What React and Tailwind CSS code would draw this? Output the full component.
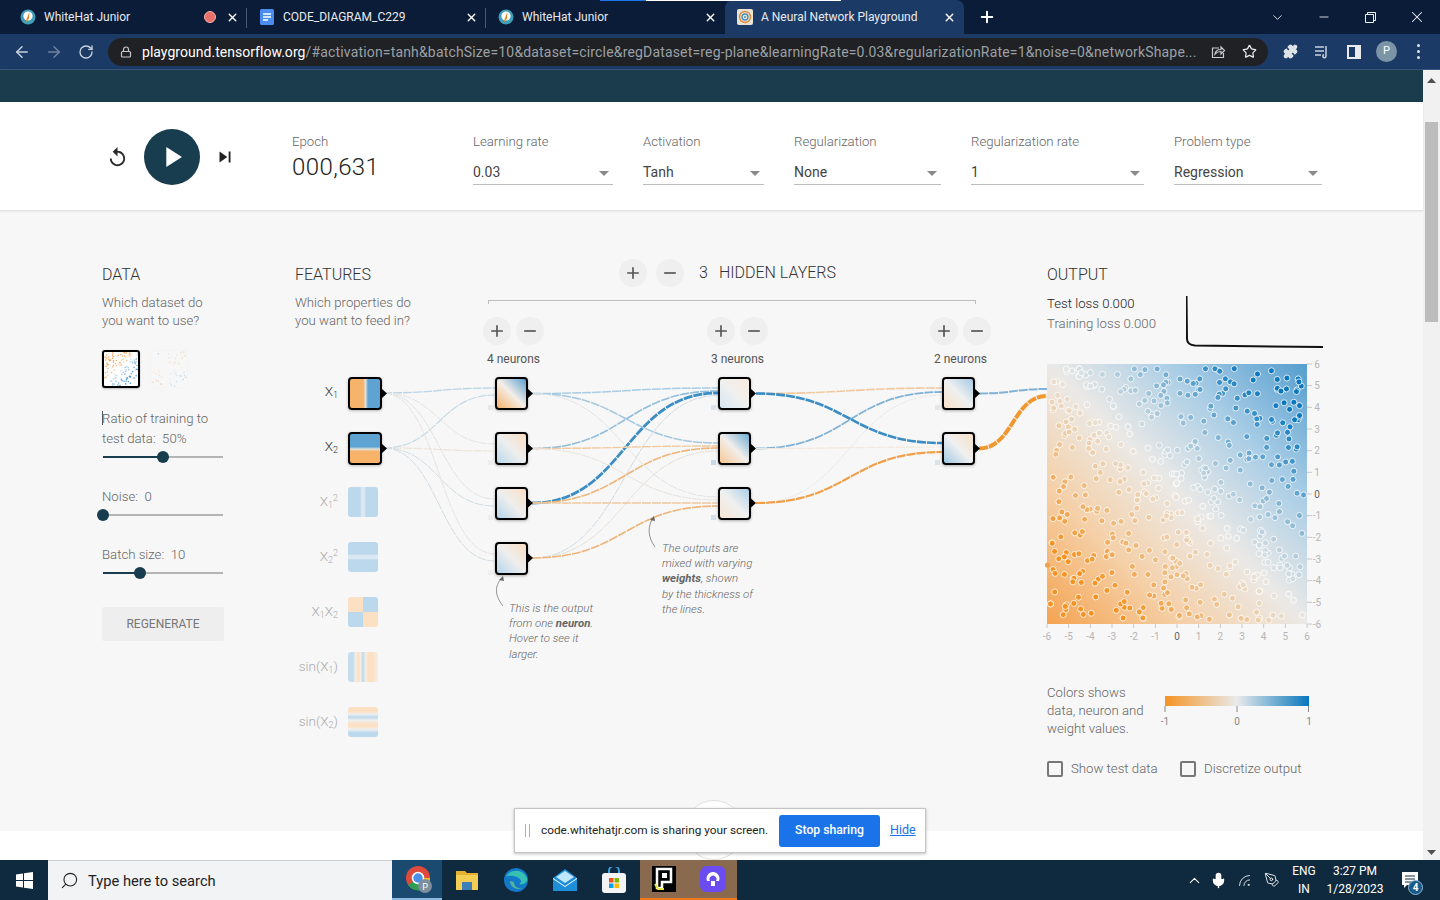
import {
  ArrowLeft, ArrowRight, RotateCw, Lock, Star, Puzzle, X, Plus, ChevronDown, Minus, Mic, ChevronUp, Search, Rss, PenTool,
} from 'lucide-react';

// seeded random so the scatter plots stay the same on every render
function rng(seed) {
  let a = seed;
  return () => {
    a |= 0; a = (a + 0x6d2b79f5) | 0;
    let t = Math.imul(a ^ (a >>> 15), 1 | a);
    t = (t + Math.imul(t ^ (t >>> 7), 61 | t)) ^ t;
    return ((t ^ (t >>> 14)) >>> 0) / 4294967296;
  };
}

const mix = (c1, c2, t) =>
  `rgb(${c1.map((c, i) => Math.round(c + (c2[i] - c) * t)).join(',')})`;
const MID = [232, 232, 230];
const BLUE = [8, 119, 189];
const ORANGE = [245, 147, 34];
const pointColor = (t) => (t > 0 ? mix(MID, BLUE, Math.min(t, 1)) : mix(MID, ORANGE, Math.min(-t, 1)));

function makePoints(n, seed) {
  const r = rng(seed);
  const out = [];
  for (let i = 0; i < n; i++) {
    out.push({ x: r() * 11.7 - 5.85, y: r() * 11.7 - 5.85 });
  }
  return out;
}

const points = makePoints(540, 23);
const thumbPoints = makePoints(120, 5);
const thumbPoints2 = makePoints(50, 9);

// links between nodes, page coordinates
const LIGHT = '#a9cce3';
const MIDBLUE = '#7fb2d6';
const DARKBLUE = '#3b8dc4';
const PALEORANGE = '#f0c9a0';
const MIDORANGE = '#eeb47a';
const GREY = '#e2e3e2';
const GREYBLUE = '#d3dde4';
const links = [
  [383, 393, 495, 388, '#b9d5e8', 1.3],
  [383, 448, 495, 395, '#c4dbe6', 1.2],
  [383, 393, 495, 444, GREY, 1],
  [383, 448, 495, 451, '#ece4d8', 1.2],
  [383, 393, 495, 499, GREY, 1],
  [383, 448, 495, 506, GREYBLUE, 1],
  [383, 393, 495, 554, GREY, 1],
  [383, 448, 495, 561, GREYBLUE, 1],

  [532, 393.5, 718, 388, LIGHT, 1.5],
  [532, 448.5, 718, 391, '#93bedb', 1.6],
  [532, 503, 718, 393, DARKBLUE, 2.8],
  [532, 558, 718, 395.5, '#d2dce3', 1],
  [532, 393.5, 718, 443, '#a3c8e0', 1.5],
  [532, 448.5, 718, 446, PALEORANGE, 1.4],
  [532, 503, 718, 448, MIDORANGE, 1.6],
  [532, 558, 718, 451, '#e6e0d8', 1],
  [532, 393.5, 718, 497, GREY, 1],
  [532, 448.5, 718, 500, '#e8e3dc', 1],
  [532, 503, 718, 503, PALEORANGE, 1.4],
  [532, 558, 718, 506, MIDORANGE, 1.6],

  [756, 393.5, 942, 388, PALEORANGE, 1.6],
  [756, 448.5, 942, 392, MIDBLUE, 1.8],
  [756, 503, 942, 395, '#eaeaea', 1],
  [756, 393.5, 942, 443, DARKBLUE, 2.6],
  [756, 448.5, 942, 447, '#f1e7dc', 1.2],
  [756, 503, 942, 452, '#f0a04a', 2.2],

  [979, 393.5, 1047, 389, MIDBLUE, 2],
  [979, 448.5, 1047, 396, '#f0982f', 4],
];

const triangles = [
  [382, 393.5], [382, 448.5],
  [528, 393.5], [528, 448.5], [528, 503], [528, 558],
  [751, 393.5], [751, 448.5], [751, 503],
  [975, 393.5], [975, 448.5],
];

function LinksLayer() {
  return (
    <svg className="absolute inset-0" width="752" height="620" viewBox="295 211 752 620" fill="none">
      {links.map(([x0, y0, x1, y1, color, w], i) => {
        const m = (x0 + x1) / 2;
        return (
          <path key={i} d={`M${x0} ${y0}C${m} ${y0} ${m} ${y1} ${x1} ${y1}`} stroke={color} strokeWidth={w} strokeDasharray="9 1" />
        );
      })}
      {triangles.map(([x, y]) => (
        <polygon key={`${x}-${y}`} points={`${x},${y - 4.5} ${x + 5},${y} ${x},${y + 4.5}`} fill="#000" />
      ))}
      {/* annotation arrows */}
      <path d="M503 606C495 596 494 586 502 578" stroke="#777" strokeWidth="0.8" />
      <polygon points="503,576 499,580 504,581" fill="#666" />
      <path d="M655 547C647 536 648 526 653 518" stroke="#777" strokeWidth="0.8" />
      <polygon points="654,516 650,520 655,521" fill="#666" />
    </svg>
  );
}

function SelectBox({ label, value, width }) {
  return (
    <div className={`${width} pt-[3px]`}>
      <div className="text-[13.2px] leading-5 font-light text-[#666]">{label}</div>
      <div className="mt-[10px] flex h-[23px] items-start justify-between border-b border-[#bdbdbd] pr-[4px] text-[14px] leading-5 text-[#444]">
        <span>{value}</span>
        <svg width="10" height="5" viewBox="0 0 10 5" className="mt-[9px]"><polygon points="0,0 10,0 5,5" fill="#8a8a8a" /></svg>
      </div>
    </div>
  );
}

function RoundButton({ icon }) {
  return (
    <div className="flex h-7 w-7 items-center justify-center rounded-full bg-[#efefef]">
      <svg width="20" height="20" viewBox="0 0 24 24" fill="#555">
        <path d={icon === 'add' ? 'M19 13h-6v6h-2v-6H5v-2h6V5h2v6h6v2z' : 'M19 13H5v-2h14v2z'} />
      </svg>
    </div>
  );
}

function Slider({ fill, label }) {
  return (
    <div>
      <div className="-mb-px pt-px text-[13.2px] leading-5 font-light text-[#666]">{label}</div>
      <div className="relative ml-px flex h-[18px] w-[120px] items-center">
        <div className="h-[2px] w-full bg-[#b4b4b4]" />
        <div className="absolute left-0 h-[2px] bg-[#183d4e]" style={{ width: fill }} />
        <div className="absolute h-3 w-3 -translate-x-1/2 rounded-full bg-[#183d4e]" style={{ left: fill }} />
      </div>
    </div>
  );
}

function Thumb({ pts, flip, className }) {
  return (
    <svg viewBox="-6 -6 12 12" className={className}>
      {pts.map((p, i) => {
        const t = flip ? (p.x * p.y) / 20 : (p.x + p.y) / 8;
        return <circle key={i} cx={p.x} cy={p.y} r="0.28" fill={t > 0 ? '#4d9bd1' : '#f0a050'} opacity={Math.min(Math.abs(t) + 0.25, 1)} />;
      })}
    </svg>
  );
}

function Feature({ label, active, fill }) {
  return (
    <div className="flex h-[55px] items-start">
      <div className={`flex h-[33px] w-[43px] items-center justify-end pb-[5px] text-[13.5px] font-light ${active ? 'text-[#333]' : 'text-[#aaa]'}`}>
        <span className="whitespace-nowrap">{label}</span>
      </div>
      <div className={`ml-[10px] ${active ? 'h-[33px] w-[34px] rounded-[4px] border-2 border-black shadow-[0_1px_3px_rgba(0,0,0,0.25)]' : 'h-[30px] w-[30px] rounded-[3px]'} ${fill}`} />
    </div>
  );
}

const Sub = ({ children }) => <sub className="text-[9px]">{children}</sub>;
const Sup = ({ children }) => <sup className="text-[9px]">{children}</sup>;

function Neuron({ fill, dot, indent }) {
  return (
    <div className="h-[55px]">
      <div className={`relative h-[33px] w-[33px] rounded-[4px] border-2 border-black shadow-[0_1px_3px_rgba(0,0,0,0.3)] ${indent} ${fill}`}>
        <div className={`absolute -left-[9px] bottom-[-2px] h-[5px] w-[5px] ${dot}`} />
      </div>
    </div>
  );
}

function Layer({ label, width, indent, neurons }) {
  return (
    <div className={width}>
      <div className="flex gap-[5px]">
        <RoundButton icon="add" />
        <RoundButton icon="remove" />
      </div>
      <div className="mt-[6px] w-[61px] text-center text-[12px] leading-4 whitespace-nowrap text-[#555]">{label}</div>
      <div className="mt-[10px]">
        {neurons.map((n, i) => <Neuron key={i} fill={n.fill} dot={n.dot} indent={indent} />)}
      </div>
    </div>
  );
}

const layer1 = [
  { fill: 'bg-[linear-gradient(45deg,#f5b069,#f3eee8_50%,#5a9fcf)]', dot: 'bg-[#e6e9ec]' },
  { fill: 'bg-[linear-gradient(45deg,#bcd8ec,#eeeeee_50%,#f9dcc0)]', dot: 'bg-[#eeeeee]' },
  { fill: 'bg-[linear-gradient(45deg,#b5d4ea,#eeeeee_50%,#f9dfc4)]', dot: 'bg-[#eeeeee]' },
  { fill: 'bg-[linear-gradient(45deg,#b5d4ea,#eeeeee_50%,#f9dfc4)]', dot: 'bg-[#eeeeee]' },
];
const layer2 = [
  { fill: 'bg-[linear-gradient(45deg,#d5e5f1,#f0f0ef_50%,#f9ebdc)]', dot: 'bg-[#dbe4ec]' },
  { fill: 'bg-[linear-gradient(45deg,#f7c894,#f2eeea_50%,#6eacd6)]', dot: 'bg-[#c9d8e6]' },
  { fill: 'bg-[linear-gradient(45deg,#f7e6d4,#eff0f0_50%,#abcee6)]', dot: 'bg-[#d5e0ea]' },
];
const layer3 = [
  { fill: 'bg-[linear-gradient(45deg,#f8e0c8,#eff0f0_50%,#a5cae4)]', dot: 'bg-[#e3e7ea]' },
  { fill: 'bg-[linear-gradient(45deg,#9fc7e3,#eff0f0_50%,#f8e0c8)]', dot: 'bg-[#dbe3ea]' },
];

function Heatmap() {
  const ticks = [-6, -5, -4, -3, -2, -1, 0, 1, 2, 3, 4, 5, 6];
  return (
    <svg width="280" height="285" className="overflow-visible">
      <defs>
        <linearGradient id="heat" x1="0" y1="1" x2="1" y2="0">
          <stop offset="0" stopColor="#f4a350" />
          <stop offset="0.26" stopColor="#f5cfa6" />
          <stop offset="0.5" stopColor="#ebe9e6" />
          <stop offset="0.74" stopColor="#a9cde6" />
          <stop offset="1" stopColor="#559dce" />
        </linearGradient>
        <clipPath id="heatClip"><rect x="-3" y="4" width="266" height="260" /></clipPath>
      </defs>
      <rect x="0" y="4" width="260" height="260" fill="url(#heat)" />
      <g clipPath="url(#heatClip)">
        {points.map((p, i) => {
          const t = (p.x + p.y - 0.5) / 8.5;
          return (
            <circle key={i} cx={(p.x + 6) * (260 / 12)} cy={4 + (6 - p.y) * (260 / 12)} r="3" fill={pointColor(t)} stroke="#fff" strokeOpacity="0.8" strokeWidth="1" />
          );
        })}
      </g>
      <circle cx="0.5" cy="205" r="2.6" fill="#f0a24e" />
      {ticks.map((v) => {
        const y = 4 + (6 - v) * (260 / 12);
        const x = (v + 6) * (260 / 12);
        const color = v === 0 ? '#666' : '#b5b5b5';
        return (
          <g key={v} fontSize="10" fontFamily="Roboto, sans-serif" fill={color}>
            <line x1="260" y1={y} x2="265" y2={y} stroke="#c8c8c8" />
            <text x="270" y={y + 3.5} textAnchor="middle" dx="0">{v}</text>
            <line x1={x} y1="264" x2={x} y2="268" stroke="#c8c8c8" />
            <text x={x} y="280" textAnchor="middle">{v}</text>
          </g>
        );
      })}
    </svg>
  );
}

function Tab({ title, icon, active, record, divider }) {
  return (
    <div className={`relative flex h-full w-[239px] shrink-0 items-center pl-[12px] pr-[8px] ${active ? 'rounded-t-[8px] bg-[#1c3a66]' : ''}`}>
      <div className="mr-[8px] flex h-4 w-4 shrink-0 items-center justify-center">{icon}</div>
      <span className="flex-1 truncate text-[12px] leading-4 text-[#e8eaed]">{title}</span>
      {record && <span className="mr-[10px] h-[12px] w-[12px] rounded-full border border-[#f6b0a8] bg-[#e8706a]" />}
      <X size={13} strokeWidth={2.6} className="text-white" />
      {divider && <span className="absolute right-0 top-[8px] h-[20px] w-px bg-[#4a5a74]" />}
    </div>
  );
}

function WhitehatIcon() {
  return (
    <svg width="16" height="16" viewBox="0 0 16 16">
      <circle cx="8" cy="8" r="7.5" fill="#3f9fb8" />
      <circle cx="8" cy="7" r="4.6" fill="#fff" />
      <path d="M9.5 2.5 L7 9 L5.5 14 L9 9.5Z" fill="#f08a24" />
    </svg>
  );
}

export default function App() {
  return (
    <div className="relative flex h-[900px] w-[1440px] flex-col overflow-hidden bg-white font-['Roboto',sans-serif]">
      {/* tab strip */}
      <div className="relative flex h-[34px] shrink-0 items-end bg-[#0a1c38] pl-[8px]">
        <Tab title="WhiteHat Junior" icon={<WhitehatIcon />} record divider />
        <Tab title="CODE_DIAGRAM_C229" divider icon={
          <svg width="14" height="16" viewBox="0 0 14 16"><rect width="14" height="16" rx="1.5" fill="#4a8cf0" /><path d="M3 5h8M3 8h8M3 11h5" stroke="#fff" strokeWidth="1.3" /></svg>
        } />
        <Tab title="WhiteHat Junior" icon={<WhitehatIcon />} />
        <Tab title="A Neural Network Playground" active icon={
          <svg width="16" height="16" viewBox="0 0 16 16"><rect width="16" height="16" rx="2" fill="#e9e4d4" /><circle cx="8" cy="8" r="5.5" fill="none" stroke="#e08a3c" strokeWidth="1.4" /><circle cx="8" cy="8" r="3" fill="none" stroke="#4a90c0" strokeWidth="1.4" /><circle cx="8" cy="8" r="1" fill="#4a90c0" /></svg>
        } />
        <Plus size={18} strokeWidth={2.6} className="mb-[8px] ml-[14px] text-white" />
        <div className="ml-auto flex h-full items-center pr-[14px] text-[#eef1f4]">
          <ChevronDown size={15} strokeWidth={1.4} className="mr-[32px]" />
          <Minus size={14} strokeWidth={1.5} className="mr-[34px]" />
          <svg width="11" height="11" viewBox="0 0 11 11" fill="none" stroke="currentColor" className="mr-[32px]"><path d="M.5 2.5h8v8h-8zM2.5 2.5v-2h8v8h-2" /></svg>
          <X size={18} strokeWidth={1.4} />
        </div>
        <div className="absolute left-[600px] top-0 h-px w-[46px] bg-[#1a73e8]" />
        <div className="absolute left-[646px] top-0 h-px w-[195px] bg-white" />
      </div>

      {/* toolbar */}
      <div className="flex h-[36px] shrink-0 items-center border-b border-[#3b5a85] bg-[#1c3a66] pl-[13px] pr-[13px]">
        <ArrowLeft size={18} strokeWidth={2} className="text-[#c9d1dc]" />
        <ArrowRight size={18} strokeWidth={2} className="ml-[14px] text-[#71839e]" />
        <RotateCw size={16} strokeWidth={2} className="ml-[15px] text-[#c9d1dc]" />
        <div className="ml-[14px] flex h-[28px] w-[1160px] items-center rounded-full bg-[#202124] pl-[12px] pr-[11px]">
          <Lock size={12} strokeWidth={2.4} className="shrink-0 text-[#c4c7cb]" />
          <span className="ml-[10px] w-[1056px] truncate text-[14px] leading-5 tracking-[0.17px] text-[#9aa0a6]">
            <span className="tracking-[0.03px] text-white">playground.tensorflow.org</span>
            /#activation=tanh&amp;batchSize=10&amp;dataset=circle&amp;regDataset=reg-plane&amp;learningRate=0.03&amp;regularizationRate=1&amp;noise=0&amp;networkShape...
          </span>
          <svg width="16" height="16" viewBox="0 0 16 16" fill="none" stroke="#c9cdd2" strokeWidth="1.2" className="ml-auto"><path d="M9 4H2.5v9.5h11V9" /><path d="M5 10c.5-3 3-4.5 6-4.5V3l3.5 3.5L11 10V7.5C8.5 7.5 6.5 8.3 5 10z" /></svg>
          <Star size={15} strokeWidth={2} className="ml-[16px] text-[#e8eaed]" />
        </div>
        <Puzzle size={15} fill="#dfe3e8" className="ml-[15px] text-[#dfe3e8]" />
        <svg width="16" height="14" viewBox="0 0 16 14" fill="none" stroke="#c9d1dc" strokeWidth="1.5" className="ml-[16px]"><path d="M1 2h9M1 6h9M1 10h6M12 1v10a1.6 1.6 0 1 1-2-1.5" /></svg>
        <svg width="14" height="14" viewBox="0 0 14 14" className="ml-[17px]"><rect x="1" y="1" width="12" height="12" fill="none" stroke="#e8eaed" strokeWidth="2" /><rect x="8" y="1" width="5" height="12" fill="#e8eaed" /></svg>
        <div className="ml-[15px] flex h-[21px] w-[21px] items-center justify-center rounded-full bg-[#7b95a6] text-[11px] text-white">P</div>
        <div className="ml-[20px] flex flex-col gap-[3px]">
          <span className="h-[3px] w-[3px] rounded-full bg-[#dfe3e8]" />
          <span className="h-[3px] w-[3px] rounded-full bg-[#dfe3e8]" />
          <span className="h-[3px] w-[3px] rounded-full bg-[#dfe3e8]" />
        </div>
      </div>

      {/* page + scrollbar */}
      <div className="flex min-h-0 flex-1">
        <div className="flex w-[1423px] flex-col">
          <div className="h-[32px] shrink-0 bg-[#1a3c4d] shadow-[0_1px_3px_rgba(0,0,0,0.4)]" />

          {/* top controls */}
          <div className="relative flex h-[109px] shrink-0 items-start border-b border-[#e4e4e4] bg-white pl-[108px] pt-[27px] shadow-[0_1px_2px_rgba(0,0,0,0.06)]">
            <div className="flex h-[56px] w-[184px] items-center">
              <svg width="23" height="23" viewBox="0 0 24 24" fill="#2b2b2b" className="-ml-[2px]"><path d="M12 5V1L7 6l5 5V7c3.31 0 6 2.69 6 6s-2.69 6-6 6-6-2.69-6-6H4c0 4.42 3.58 8 8 8s8-3.58 8-8-3.58-8-8-8z" /></svg>
              <div className="ml-[15px] flex h-[56px] w-[56px] items-center justify-center rounded-full bg-[#183d4e]">
                <svg width="34" height="34" viewBox="0 0 24 24" fill="#fff"><path d="M8 5v14l11-7z" /></svg>
              </div>
              <svg width="22" height="22" viewBox="0 0 24 24" fill="#222" className="ml-[14px]"><path d="M6 18l8.5-6L6 6v12zM16 6v12h2V6h-2z" /></svg>
            </div>
            <div className="w-[181px] pt-[3px]">
              <div className="text-[13.2px] leading-5 font-light text-[#666]">Epoch</div>
              <div className="text-[24px] leading-[30px] font-light tracking-[0.4px] text-[#222]">000,631</div>
            </div>
            <div className="flex gap-[30px]">
              <SelectBox label="Learning rate" value="0.03" width="w-[140px]" />
              <SelectBox label="Activation" value="Tanh" width="w-[121px]" />
              <SelectBox label="Regularization" value="None" width="w-[147px]" />
              <SelectBox label="Regularization rate" value="1" width="w-[173px]" />
              <SelectBox label="Problem type" value="Regression" width="w-[148px]" />
            </div>
          </div>

          {/* main area */}
          <div className="flex h-[620px] shrink-0 bg-[#f7f7f7] pl-[102px]">
            {/* data column */}
            <div className="w-[193px] pt-[54px]">
              <h4 className="text-[16px] leading-5 font-light text-[#333]">DATA</h4>
              <p className="mt-[9px] text-[13.2px] leading-[18px] font-light text-[#666]">Which dataset do<br />you want to use?</p>
              <div className="mt-[20px] flex gap-[10px]">
                <div className="h-[38px] w-[38px] rounded-[3px] border-2 border-black bg-white shadow-[0_1px_2px_rgba(0,0,0,0.25)]">
                  <Thumb pts={thumbPoints} className="h-full w-full" />
                </div>
                <div className="h-[38px] w-[38px] rounded-[3px] border border-[#f0f0f0] opacity-30">
                  <Thumb pts={thumbPoints2} flip className="h-full w-full" />
                </div>
              </div>
              <div className="mt-[20px]">
                <Slider fill="60px" label={<><span className="mr-[-1px] inline-block h-[14px] w-px bg-[#555] align-[-2px]" />Ratio of training to<br />test data:&nbsp; 50%</>} />
              </div>
              <div className="mt-[20px]"><Slider fill="0px" label="Noise:&nbsp; 0" /></div>
              <div className="mt-[20px]"><Slider fill="37px" label="Batch size:&nbsp; 10" /></div>
              <button className="mt-[25px] flex h-[34px] w-[122px] items-center justify-center rounded-[2px] bg-[#eeeeee] text-[12px] font-normal text-[#777]">REGENERATE</button>
            </div>

            {/* features + network share one canvas with the links behind */}
            <div className="relative flex w-[752px]">
              <LinksLayer />
              <div className="relative w-[188px] pt-[54px]">
                <h4 className="text-[16px] leading-5 font-light text-[#333]">FEATURES</h4>
                <p className="mt-[9px] text-[13.2px] leading-[18px] font-light text-[#666]">Which properties do<br />you want to feed in?</p>
                <div className="mt-[47px]">
                  <Feature active label={<>X<Sub>1</Sub></>} fill="bg-[linear-gradient(90deg,#f7b36a_0,#f7b36a_44%,#dfe3df_52%,#5fa3d2_60%,#5fa3d2_100%)]" />
                  <Feature active label={<>X<Sub>2</Sub></>} fill="bg-[linear-gradient(180deg,#5fa3d2_0,#5fa3d2_44%,#dfe3df_52%,#f7b36a_60%,#f7b36a_100%)]" />
                  <Feature label={<>X<Sub>1</Sub><Sup>2</Sup></>} fill="bg-[linear-gradient(90deg,#bcd8ec_0,#bcd8ec_40%,#d9e8f2_45%,#d9e8f2_55%,#bcd8ec_60%,#bcd8ec_100%)]" />
                  <Feature label={<>X<Sub>2</Sub><Sup>2</Sup></>} fill="bg-[linear-gradient(180deg,#bcd8ec_0,#bcd8ec_40%,#d9e8f2_45%,#d9e8f2_55%,#bcd8ec_60%,#bcd8ec_100%)]" />
                  <Feature label={<>X<Sub>1</Sub>X<Sub>2</Sub></>} fill="bg-[conic-gradient(#bcd8ec_0_25%,#fbe0c3_25%_50%,#bcd8ec_50%_75%,#fbe0c3_75%_100%)]" />
                  <Feature label={<>sin(X<Sub>1</Sub>)</>} fill="bg-[linear-gradient(90deg,#c6ddee_0,#c6ddee_18%,#f3eee6_24%,#fbe0c3_36%,#f3eee6_42%,#bcd8ec_50%,#f3eee6_58%,#fbe0c3_68%,#fbe0c3_82%,#f3eee6_100%)]" />
                  <Feature label={<>sin(X<Sub>2</Sub>)</>} fill="bg-[linear-gradient(180deg,#fbe0c3_0,#fbe0c3_16%,#eef0f0_24%,#bcd8ec_34%,#eef0f0_44%,#fbe0c3_58%,#fbe0c3_66%,#eef0f0_74%,#bcd8ec_86%,#bcd8ec_100%)]" />
                </div>
              </div>

              <div className="relative flex-1 pt-[48px]">
                <div className="ml-[136px] flex items-center">
                  <RoundButton icon="add" />
                  <div className="ml-[9px]"><RoundButton icon="remove" /></div>
                  <span className="ml-[15px] text-[16px] leading-7 font-light text-[#333]">3</span>
                  <span className="ml-[11px] text-[16px] leading-7 font-light text-[#333]">HIDDEN LAYERS</span>
                </div>
                <div className="ml-[5px] mt-[13px] h-[4px] w-[488px] border-x border-t border-[#bdbdbd]" />
                <div className="mt-[13px] flex">
                  <Layer label="4 neurons" width="w-[224px]" indent="ml-[12px]" neurons={layer1} />
                  <Layer label="3 neurons" width="w-[223px]" indent="ml-[11px]" neurons={layer2} />
                  <Layer label="2 neurons" width="w-[61px]" indent="ml-[12px]" neurons={layer3} />
                </div>
                {/* callouts sit on the diagram */}
                <p className="absolute left-[26px] top-[390px] w-[100px] text-[11.4px] leading-[15.2px] font-light italic text-[#666]">
                  This is the output<br />from one <b className="font-bold">neuron</b>.<br />Hover to see it<br />larger.
                </p>
                <p className="absolute left-[179px] top-[330px] w-[110px] text-[11.4px] leading-[15.2px] font-light italic text-[#666]">
                  The outputs are<br />mixed with varying<br /><b className="font-bold">weights</b>, shown<br />by the thickness of<br />the lines.
                </p>
              </div>
            </div>

            {/* output column */}
            <div className="w-[276px] pt-[54px]">
              <h4 className="text-[16px] leading-5 font-light text-[#333]">OUTPUT</h4>
              <div className="mt-[11px] flex h-[52px]">
                <div className="-mt-[2px] w-[139px] text-[13.2px] leading-5 font-light">
                  <div className="text-[#222]">Test loss 0.000</div>
                  <div className="text-[#666]">Training loss 0.000</div>
                </div>
                <svg width="137" height="52" fill="none" stroke="#111" strokeWidth="2">
                  <path d="M.5 0L1 43Q1.200 49 9 49.500L137 51" />
                </svg>
              </div>
              <div className="mt-[12px]"><Heatmap /></div>
              <div className="mt-[38px] flex">
                <p className="w-[108px] shrink-0 whitespace-nowrap pt-px text-[13.2px] leading-[18px] font-light text-[#666]">Colors shows<br />data, neuron and<br />weight values.</p>
                <svg width="150" height="50" className="ml-[10px] overflow-visible">
                  <defs>
                    <linearGradient id="scale" x1="0" x2="1" y1="0" y2="0">
                      <stop offset="0" stopColor="#f59322" />
                      <stop offset="0.5" stopColor="#e8eaeb" />
                      <stop offset="1" stopColor="#0877bd" />
                    </linearGradient>
                  </defs>
                  <rect x="0" y="13" width="144" height="10" fill="url(#scale)" />
                  <path d="M0 23v6M72 23v6M143.500 23v6" stroke="#888" strokeWidth="1" />
                  <g fontSize="10" fill="#888" fontFamily="Roboto, sans-serif" textAnchor="middle">
                    <text x="0" y="42">-1</text>
                    <text x="72" y="42">0</text>
                    <text x="144" y="42">1</text>
                  </g>
                </svg>
              </div>
              <div className="mt-[21px] flex items-center text-[13.2px] font-light text-[#666]">
                <span className="h-4 w-4 rounded-[2px] border-2 border-[#777]" />
                <span className="ml-[8px] w-[101px] whitespace-nowrap">Show test data</span>
                <span className="ml-[8px] h-4 w-4 rounded-[2px] border-2 border-[#777]" />
                <span className="ml-[8px] whitespace-nowrap">Discretize output</span>
              </div>
            </div>
          </div>

          <div className="flex-1 bg-white" />
        </div>

        {/* scrollbar */}
        <div className="flex w-[17px] flex-col items-center bg-[#f1f1f1]">
          <svg width="9" height="5" viewBox="0 0 9 5" className="mt-[8px]"><polygon points="0,5 9,5 4.500,0" fill="#505050" /></svg>
          <div className="mt-[39px] h-[200px] w-[13px] bg-[#bcbcbc]" />
          <svg width="9" height="5" viewBox="0 0 9 5" className="mb-[5px] mt-auto"><polygon points="0,0 9,0 4.500,5" fill="#505050" /></svg>
        </div>
      </div>

      {/* taskbar */}
      <div className="flex h-[40px] shrink-0 items-center bg-[#0f2a3f]">
        <div className="flex h-full w-[48px] items-center justify-center">
          <svg width="17" height="17" viewBox="0 0 17 17" fill="#fff"><path d="M0 2.500 7 1.500V8H0zM8 1.300 17 0V8H8zM0 9h7v6.500L0 14.500zM8 9h9v8L8 15.700z" /></svg>
        </div>
        <div className="flex h-full w-[344px] items-center border-t border-[#c8ccd0] bg-[#f1f3f5] pl-[12px] text-[14.7px] text-[#222]">
          <Search size={19} strokeWidth={1.4} className="-scale-x-100" />
          <span className="ml-[9px] mt-px">Type here to search</span>
        </div>
        <div className="flex h-full w-[50px] items-center justify-center border-b-2 border-[#8db9e0] bg-[#1b4a70]">
          <svg width="28" height="28" viewBox="0 0 28 28" className="ml-[4px]">
            <circle cx="13" cy="13" r="12" fill="#e04a3c" />
            <path d="M13 13 L3 20 A12 12 0 0 0 16 25z" fill="#2f9e55" />
            <path d="M13 13 L25 13 A12 12 0 0 1 16 25z" fill="#f5c020" />
            <circle cx="13" cy="13" r="5.500" fill="#4a90e8" stroke="#fff" strokeWidth="1.500" />
            <circle cx="20" cy="21" r="7" fill="#7d8f9c" />
            <text x="20" y="24.500" fontSize="9" textAnchor="middle" fill="#fff">P</text>
          </svg>
        </div>
        <div className="flex h-full w-[49px] items-center justify-center">
          <svg width="22" height="20" viewBox="0 0 22 20"><path d="M0 1h9l2 2h11v4H0z" fill="#e6b12e" /><rect y="5" width="22" height="15" fill="#f4cd55" /><rect x="6" y="12" width="10" height="8" fill="#3c7fb5" /></svg>
        </div>
        <div className="flex h-full w-[49px] items-center justify-center">
          <svg width="24" height="24" viewBox="0 0 24 24">
            <circle cx="12" cy="12" r="12" fill="#1478c8" />
            <path d="M2 9C5 1 19 0 23 10c1 5-4 7-8 6 2-1 3-3 1-5C12 7 3 7 2 9z" fill="#35c1b1" />
            <path d="M6 13c0 6 7 10 13 7-5 1-9-1-9-6z" fill="#7fe07a" opacity="0.6" />
          </svg>
        </div>
        <div className="flex h-full w-[49px] items-center justify-center">
          <svg width="24" height="22" viewBox="0 0 24 22"><path d="M12 0 24 9v13H0V9z" fill="#1c8fd8" /><path d="M0 9l12 8 12-8v1L12 18 0 10z" fill="#fff" /><path d="M3 8 12 2l9 6-9 6z" fill="#bfe6fb" /></svg>
        </div>
        <div className="flex h-full w-[49px] items-center justify-center">
          <svg width="24" height="26" viewBox="0 0 24 26"><path d="M7 7V4a5 5 0 0 1 10 0v3" fill="none" stroke="#3aa0d8" strokeWidth="2" /><rect y="6" width="24" height="20" rx="3" fill="#f4f4f4" /><rect x="7" y="11" width="4.500" height="4.500" fill="#f25022" /><rect x="12.500" y="11" width="4.500" height="4.500" fill="#7fba00" /><rect x="7" y="16.500" width="4.500" height="4.500" fill="#00a4ef" /><rect x="12.500" y="16.500" width="4.500" height="4.500" fill="#ffb900" /></svg>
        </div>
        <div className="ml-[2px] flex h-full w-[48px] items-center justify-center border-b-2 border-[#f07a1c] bg-[#8a6a4f]">
          <svg width="24" height="26" viewBox="0 0 24 26"><rect width="24" height="26" fill="#000" /><path d="M5 3h14v13H10v6H5z" fill="none" stroke="#fff" strokeWidth="2.500" /><path d="M10 7h5v5h-5z" fill="#fff" /><path d="M3 18l3 5h6" stroke="#e8e440" strokeWidth="2" fill="none" /></svg>
        </div>
        <div className="flex h-full w-[49px] items-center justify-center border-b-2 border-[#f07a1c] bg-[#8a6a4f]">
          <div className="flex h-[26px] w-[26px] items-center justify-center rounded-[7px] bg-[#6a4cf0]">
            <svg width="16" height="16" viewBox="0 0 16 16"><path d="M8 1a6.500 6.500 0 0 0-6 9l3 0a3.500 3.500 0 1 1 6 0l3 0A6.500 6.500 0 0 0 8 1z" fill="#fff" /><rect x="6" y="10" width="4" height="5" fill="#fff" /></svg>
          </div>
        </div>

        <div className="ml-auto flex h-full items-center text-white">
          <ChevronUp size={17} strokeWidth={1.5} />
          <Mic size={17} strokeWidth={2} fill="#fff" className="ml-[7px]" />
          <Rss size={15} strokeWidth={1.5} className="ml-[10px] -scale-x-100 opacity-90" />
          <PenTool size={16} strokeWidth={1.3} className="ml-[12px]" />
          <div className="ml-[7px] w-[34px] text-center text-[12px] leading-[18px]">ENG<br />IN</div>
          <div className="ml-px w-[66px] text-center text-[12px] leading-[18px]">3:27 PM<br />1/28/2023</div>
          <div className="relative ml-[7px] mr-[15px] flex h-[40px] w-[30px] items-center justify-center">
            <svg width="17" height="17" viewBox="0 0 17 17"><path d="M0 0h16v13H5l-3 3v-3H0z" fill="#fff" /><path d="M3 4h10M3 7h10M3 10h7" stroke="#0f2a3f" strokeWidth="1" /></svg>
            <span className="absolute bottom-[5px] right-[2px] flex h-[15px] w-[15px] items-center justify-center rounded-full border border-[#8bb8d8] bg-[#1b5a88] text-[10px] font-bold text-white">4</span>
          </div>
        </div>
      </div>

      {/* chrome "sharing your screen" bar floats over the page */}
      <div className="absolute left-[684px] top-[800px] h-[60px] w-[60px] rounded-full border border-[#e0e0e0] bg-white" />
      <div className="absolute left-[514px] top-[808px] flex h-[45px] w-[412px] items-center border border-[#c4c4c4] bg-white pl-[10px] shadow-[0_1px_3px_rgba(0,0,0,0.25)]">
        <span className="h-[13px] w-[5px] border-x border-[#b0b0b0]" />
        <span className="ml-[11px] w-[238px] whitespace-nowrap text-[11.8px] text-[#222]">code.whitehatjr.com is sharing your screen.</span>
        <button className="h-[32px] w-[101px] rounded-[3px] bg-[#1a73e8] text-[12.2px] font-medium text-white">Stop sharing</button>
        <a className="ml-[10px] text-[12.5px] text-[#1a73e8] underline">Hide</a>
      </div>
    </div>
  );
}
